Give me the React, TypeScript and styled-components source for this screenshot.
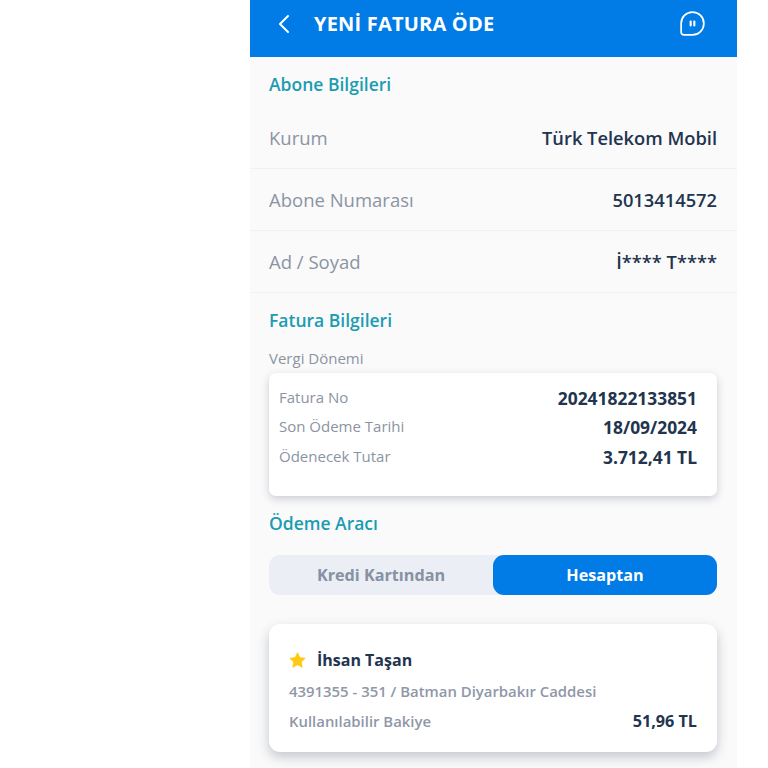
import React from "react";
import styled, { createGlobalStyle } from "styled-components";

const GlobalStyle = createGlobalStyle`
  html, body {
    margin: 0;
    padding: 0;
    background: #ffffff;
    overflow: hidden;
  }
  * {
    box-sizing: border-box;
  }
`;

const Page = styled.div`
  height: 768px;
  padding-left: 250px;
  font-family: "Open Sans", "Noto Sans", sans-serif;
`;

const Phone = styled.div`
  width: 487px;
  height: 768px;
  background: #fafafb;
  overflow: hidden;
`;

const Header = styled.header`
  height: 57px;
  background: #017be5;
  display: flex;
  align-items: center;
  padding: 0 32px 10px 27px;
  color: #ffffff;
`;

const HeaderTitle = styled.h1`
  flex: 1;
  margin: 0 0 0 23px;
  font-size: 20px;
  font-weight: 700;
  letter-spacing: 0.2px;
`;

const SectionTitle = styled.h2<{ $top: number; $bottom: number }>`
  margin: ${(p) => p.$top}px 0 ${(p) => p.$bottom}px;
  padding: 0 19px;
  height: 24px;
  line-height: 24px;
  font-size: 17.5px;
  font-weight: 600;
  color: #1b9cb0;
`;

const InfoRow = styled.div`
  height: 62px;
  padding: 0 20px 0 19px;
  display: flex;
  align-items: center;
  justify-content: space-between;
  border-bottom: 1px solid #f0f1f2;
`;

const InfoLabel = styled.span`
  font-size: 18.5px;
  color: #8b94a2;
`;

const InfoValue = styled.span`
  font-size: 18.3px;
  font-weight: 600;
  color: #22344e;
`;

const SmallLabel = styled.div`
  padding: 0 19px;
  height: 20px;
  line-height: 20px;
  font-size: 15px;
  color: #8b94a2;
`;

const BillCard = styled.div`
  margin: 5px 20px 0 19px;
  height: 123px;
  padding: 10px 20px 0 10px;
  background: #ffffff;
  border-radius: 7px;
  box-shadow: 0 3px 8px rgba(40, 50, 70, 0.22);
`;

const BillRow = styled.div`
  height: 29.5px;
  display: flex;
  align-items: center;
  justify-content: space-between;
`;

const BillLabel = styled.span`
  font-size: 15px;
  color: #8b94a2;
  position: relative;
  top: -1px;
`;

const BillValue = styled.span`
  font-size: 17.4px;
  font-weight: 700;
  color: #22344e;
`;

const Toggle = styled.div`
  margin: -1px 20px 0 19px;
  height: 40px;
  display: flex;
  background: #ebeef4;
  border-radius: 11px;
`;

const ToggleOption = styled.div<{ $active?: boolean }>`
  flex: 1;
  display: flex;
  align-items: center;
  justify-content: center;
  border-radius: 11px;
  font-size: 16.2px;
  font-weight: 700;
  color: ${(p) => (p.$active ? "#ffffff" : "#8791a3")};
  background: ${(p) => (p.$active ? "#017be5" : "transparent")};
`;

const AccountCard = styled.div`
  margin: 29px 20px 0 19px;
  height: 128px;
  padding: 24px 20px 0 20px;
  background: #ffffff;
  border-radius: 11px;
  box-shadow: 0 5px 12px rgba(40, 50, 70, 0.26);
`;

const AccountName = styled.div`
  display: flex;
  align-items: center;
  gap: 11px;
  height: 24px;
  font-size: 16px;
  font-weight: 700;
  color: #22344e;
`;

const AccountLine = styled.div`
  margin-top: 8px;
  height: 22px;
  display: flex;
  align-items: center;
  justify-content: space-between;
  font-size: 14.9px;
  font-weight: 600;
  color: #8f97a8;
`;

const Balance = styled.span`
  font-size: 16.2px;
  font-weight: 700;
  color: #22344e;
`;

export default function App() {
  return (
    <>
      <GlobalStyle />
      <Page>
        <Phone>
          <Header>
            <svg width="14" height="20" viewBox="0 0 14 20" fill="none">
              <path d="M11 2 L3 10 L11 18" stroke="#fff" strokeWidth="2" strokeLinecap="round" strokeLinejoin="round" />
            </svg>
            <HeaderTitle>YENİ FATURA ÖDE</HeaderTitle>
            <svg width="25" height="25" viewBox="0 0 26 26" fill="none">
              <path
                d="M13 1.2 C19.6 1.2 24.8 6.4 24.8 13 C24.8 19.6 19.6 24.8 13 24.8 L4 24.8 C2.4 24.8 1.2 23.6 1.2 22 L1.2 13 C1.2 6.4 6.4 1.2 13 1.2 Z"
                stroke="#fff"
                strokeWidth="1.8"
              />
              <rect x="10" y="10" width="2.2" height="6" rx="0.8" fill="#fff" />
              <rect x="13.8" y="10" width="2.2" height="6" rx="0.8" fill="#fff" />
            </svg>
          </Header>

          <SectionTitle $top={15} $bottom={11}>Abone Bilgileri</SectionTitle>
          <InfoRow>
            <InfoLabel>Kurum</InfoLabel>
            <InfoValue>Türk Telekom Mobil</InfoValue>
          </InfoRow>
          <InfoRow>
            <InfoLabel>Abone Numarası</InfoLabel>
            <InfoValue>5013414572</InfoValue>
          </InfoRow>
          <InfoRow>
            <InfoLabel>Ad / Soyad</InfoLabel>
            <InfoValue>İ**** T****</InfoValue>
          </InfoRow>

          <SectionTitle $top={15} $bottom={16}>Fatura Bilgileri</SectionTitle>
          <SmallLabel>Vergi Dönemi</SmallLabel>
          <BillCard>
            <BillRow>
              <BillLabel>Fatura No</BillLabel>
              <BillValue>20241822133851</BillValue>
            </BillRow>
            <BillRow>
              <BillLabel>Son Ödeme Tarihi</BillLabel>
              <BillValue>18/09/2024</BillValue>
            </BillRow>
            <BillRow>
              <BillLabel>Ödenecek Tutar</BillLabel>
              <BillValue>3.712,41 TL</BillValue>
            </BillRow>
          </BillCard>

          <SectionTitle $top={15} $bottom={21}>Ödeme Aracı</SectionTitle>
          <Toggle>
            <ToggleOption>Kredi Kartından</ToggleOption>
            <ToggleOption $active>Hesaptan</ToggleOption>
          </Toggle>

          <AccountCard>
            <AccountName>
              <svg width="17" height="16" viewBox="0 0 24 23">
                <path
                  d="M12 1 L15.4 8 L23 9 L17.5 14.3 L18.8 22 L12 18.3 L5.2 22 L6.5 14.3 L1 9 L8.6 8 Z"
                  fill="#fdc913"
                  stroke="#fdc913"
                  strokeLinejoin="round"
                />
              </svg>
              İhsan Taşan
            </AccountName>
            <AccountLine>4391355 - 351 / Batman Diyarbakır Caddesi</AccountLine>
            <AccountLine>
              Kullanılabilir Bakiye
              <Balance>51,96 TL</Balance>
            </AccountLine>
          </AccountCard>
        </Phone>
      </Page>
    </>
  );
}
